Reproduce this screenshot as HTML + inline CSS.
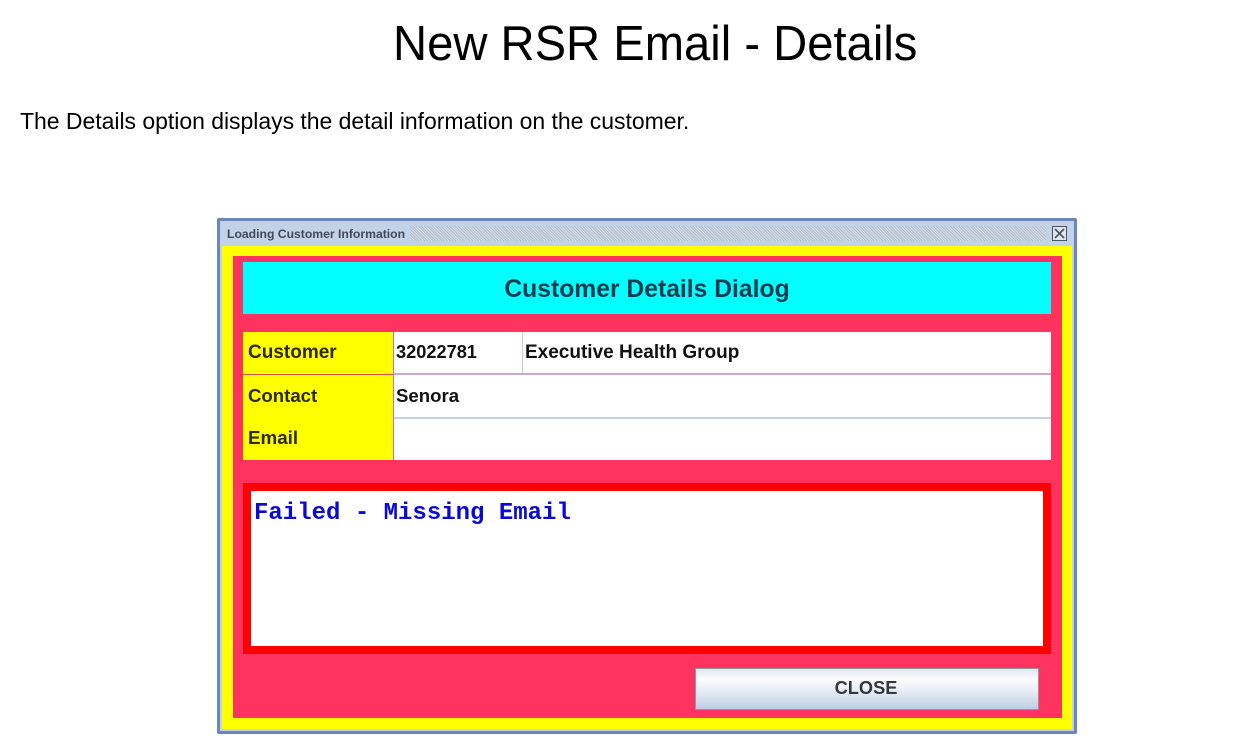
<!DOCTYPE html>
<html><head><meta charset="utf-8">
<style>
html,body{margin:0;padding:0;background:#fff}
body{width:1240px;height:746px;position:relative;overflow:hidden;font-family:"Liberation Sans",sans-serif}
.a{position:absolute;white-space:nowrap}
.b{position:absolute}
.lbl{font:bold 18.8px "Liberation Sans",sans-serif;color:#2e2a10}
.val{font:bold 18.6px "Liberation Sans",sans-serif;color:#111}
</style></head><body>
<div class="a" id="t" style="left:393px;top:16px;font-size:49px;line-height:56px;color:#000;transform:scaleX(0.963);transform-origin:left center">New RSR Email - Details</div>
<div class="a" id="p" style="left:20px;top:108px;font-size:23px;line-height:26px;color:#000;letter-spacing:-0.03px">The Details option displays the detail information on the customer.</div>

<div class="b" style="left:217px;top:218px;width:860px;height:516px;background:#6b86bd;border-radius:2px"></div>
<div class="b" style="left:220px;top:221px;width:854px;height:510px;background:#c3d2e6"></div>
<div class="b" style="left:410px;top:226px;width:636px;height:15px;background:repeating-linear-gradient(45deg,#b4bfce 0 1px,#d3dbe6 1px 2px)"></div>
<div class="a" style="left:227px;top:227px;font:bold 12.2px/14px 'Liberation Sans',sans-serif;color:#41495a">Loading Customer Information</div>
<svg class="b" style="left:1052px;top:226px" width="15" height="15" viewBox="0 0 15 15"><rect x="0.5" y="0.5" width="14" height="14" fill="#dfe6ef" stroke="#4a5363"/><path d="M3 3L12 12M12 3L3 12" stroke="#4a5363" stroke-width="1.7"/></svg>

<div class="b" style="left:222px;top:246px;width:850px;height:483px;background:#ff0"></div>
<div class="b" style="left:233px;top:256px;width:829px;height:462px;background:#ff335f"></div>
<div class="b" style="left:243px;top:262px;width:808px;height:52px;background:#0ff"></div>
<div class="a" style="left:243px;top:262px;width:808px;text-align:center;font:bold 24.7px/55px 'Liberation Sans',sans-serif;color:#163a50">Customer Details Dialog</div>

<div class="b" style="left:243px;top:332px;width:150px;height:128px;background:#ff0"></div>
<div class="b" style="left:243px;top:374px;width:150px;height:1px;background:#e0504a"></div>
<div class="b" style="left:393px;top:332px;width:658px;height:128px;background:#fff"></div>
<div class="b" style="left:393px;top:332px;width:1px;height:128px;background:#d870a8"></div>
<div class="b" style="left:522px;top:332px;width:1px;height:42px;background:#c3cfe0"></div>
<div class="b" style="left:394px;top:373px;width:657px;height:2px;background:#c9a8cc"></div>
<div class="b" style="left:394px;top:417px;width:657px;height:2px;background:#c3d2e6"></div>

<div class="a lbl" style="left:248px;top:343px;line-height:20px;font-size:19px">Customer</div>
<div class="a lbl" style="left:248px;top:386px;line-height:20px;font-size:18.6px">Contact</div>
<div class="a lbl" style="left:248px;top:428px;line-height:20px">Email</div>
<div class="a val" style="left:396px;top:342px;line-height:20px;font-size:18.2px">32022781</div>
<div class="a val" style="left:525px;top:343px;line-height:20px;font-size:19px">Executive Health Group</div>
<div class="a val" style="left:396px;top:386px;line-height:20px">Senora</div>

<div class="b" style="left:243px;top:483px;width:792px;height:155px;border:8px solid #f00;background:#fff"></div>
<div class="a" style="left:254px;top:500px;font:bold 24px/28px 'Liberation Mono',monospace;color:#0a0ad8">Failed - Missing Email</div>

<div class="b" style="left:695px;top:668px;width:342px;height:40px;border:1px solid #8f95a3;background:linear-gradient(#dfe7f1 0,#fbfcfd 25%,#e8edf4 55%,#bccee4 100%)"></div>
<div class="a" style="left:694px;top:668px;width:344px;text-align:center;font:bold 18.2px/40px 'Liberation Sans',sans-serif;color:#33383f">CLOSE</div>
</body></html>
